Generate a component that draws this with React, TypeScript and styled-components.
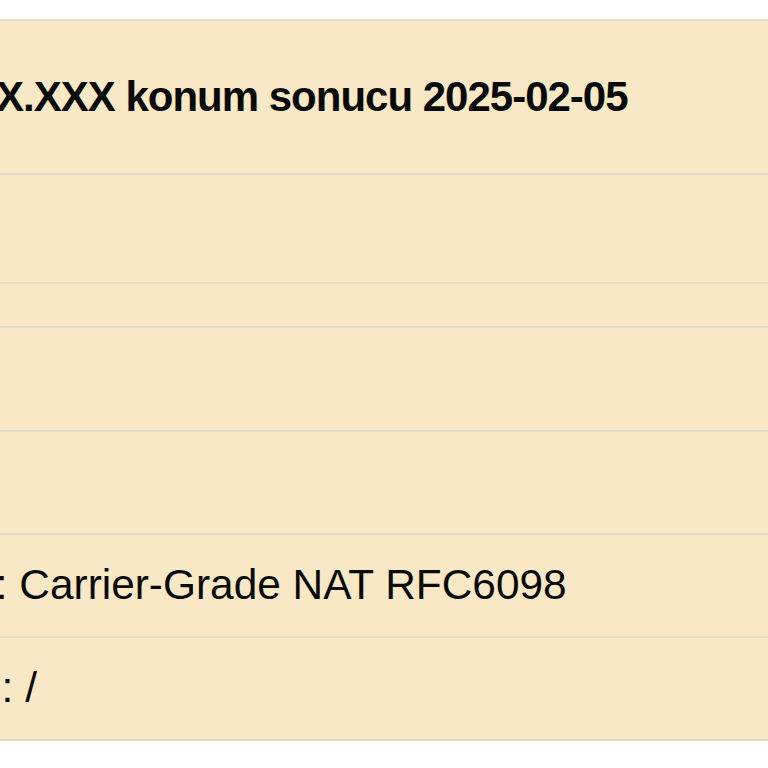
import React from "react";
import styled, { createGlobalStyle } from "styled-components";

const Global = createGlobalStyle`
  html, body { margin: 0; padding: 0; background: #ffffff; overflow: hidden; }
  body { font-family: "Liberation Sans", Arial, Helvetica, sans-serif; }
`;

const Page = styled.div`
  width: 768px;
  height: 768px;
  padding-top: 19px;
  box-sizing: border-box;
  background: #ffffff;
`;

const Table = styled.div`
  display: flex;
  flex-direction: column;
  background: #f8e8c5;
  border-top: 2px solid #e2dccb;
`;

const Row = styled.div<{ $h: number }>`
  height: ${(p) => p.$h}px;
  display: flex;
  align-items: center;
  border-bottom: 2px solid #e4dac8;
  overflow: visible;
`;

const Cell = styled.div<{ $shift: number; $bold?: boolean }>`
  white-space: nowrap;
  font-size: ${(p) => (p.$bold ? "42px" : "42.4px")};
  line-height: 1;
  color: #0a0a0a;
  font-weight: ${(p) => (p.$bold ? 700 : 400)};
  letter-spacing: ${(p) => (p.$bold ? "-1px" : "0")};
  text-indent: ${(p) => p.$shift}px;
`;

export default function App() {
  return (
    <>
      <Global />
      <Page>
        <Table>
          <Row $h={152}>
            <Cell $bold $shift={-4}>X.XXX konum sonucu 2025-02-05</Cell>
          </Row>
          <Row $h={107} />
          <Row $h={42} />
          <Row $h={102} />
          <Row $h={101} />
          <Row $h={101}>
            <Cell $shift={-16}>t: Carrier-Grade NAT RFC6098</Cell>
          </Row>
          <Row $h={101}>
            <Cell $shift={-22}>n: /</Cell>
          </Row>
        </Table>
      </Page>
    </>
  );
}
